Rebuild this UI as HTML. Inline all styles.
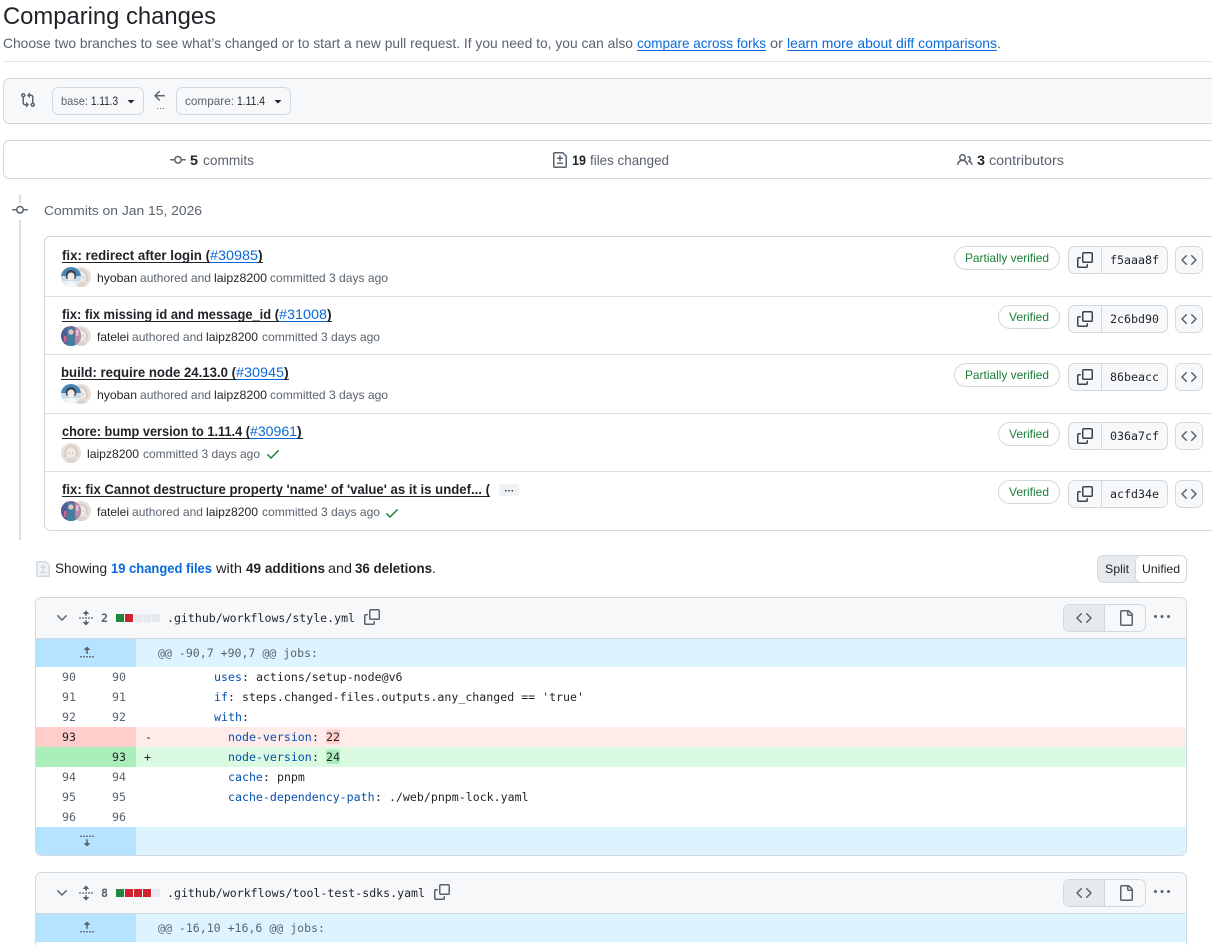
<!DOCTYPE html>
<html lang="en">
<head>
<meta charset="utf-8">
<title>Comparing changes</title>
<style>
html,body{margin:0;padding:0;background:#fff;width:1212px;height:945px;overflow:hidden}
svg{display:block}
text{font-family:"Liberation Sans",Arial,sans-serif;font-size:14px;fill:#1f2328;white-space:pre}
.m{fill:#59636e}
.b{font-weight:700}
.l{fill:#0969da}
.s{font-size:12px}
.g{fill:#1a7f37;font-size:12px}
.c{font-family:"DejaVu Sans Mono","Liberation Mono",monospace;font-size:11.6px}
.k{fill:#0550ae}
.n{fill:#59636e;text-anchor:end}
.i{fill:#59636e}
.d{fill:#1f2328}
.bx{fill:#f6f8fa;stroke:#d1d9e0}
</style>
</head>
<body>
<svg xmlns="http://www.w3.org/2000/svg" width="1212" height="945" viewBox="0 0 1212 945">
<defs>
<symbol id="compare" viewBox="0 0 16 16"><path d="M9.573.677A.25.25 0 0 1 10 .854V2.5h1A2.5 2.5 0 0 1 13.5 5v5.628a2.251 2.251 0 1 1-1.5 0V5a1 1 0 0 0-1-1h-1v1.646a.25.25 0 0 1-.427.177L7.177 3.427a.25.25 0 0 1 0-.354ZM6 12v-1.646a.25.25 0 0 1 .427-.177l2.396 2.396a.25.25 0 0 1 0 .354l-2.396 2.396A.25.25 0 0 1 6 15.146V13.5H5A2.5 2.5 0 0 1 2.5 11V5.372a2.25 2.25 0 1 1 1.5 0V11a1 1 0 0 0 1 1ZM4 3.25a.75.75 0 1 0-1.5 0 .75.75 0 0 0 1.5 0ZM12.75 12a.75.75 0 1 0 0 1.5.75.75 0 0 0 0-1.5Z"/></symbol>
<symbol id="commit" viewBox="0 0 16 16"><path d="M11.93 8.5a4.002 4.002 0 0 1-7.86 0H.75a.75.75 0 0 1 0-1.5h3.32a4.002 4.002 0 0 1 7.86 0h3.32a.75.75 0 0 1 0 1.5Zm-1.43-.75a2.5 2.5 0 1 0-5 0 2.5 2.5 0 0 0 5 0Z"/></symbol>
<symbol id="filediff" viewBox="0 0 16 16"><path d="M1 1.75C1 .784 1.784 0 2.75 0h7.586c.464 0 .909.184 1.237.513l2.914 2.914c.329.328.513.773.513 1.237v9.586A1.75 1.75 0 0 1 13.25 16H2.75A1.75 1.75 0 0 1 1 14.25Zm1.75-.25a.25.25 0 0 0-.25.25v12.5c0 .138.112.25.25.25h10.5a.25.25 0 0 0 .25-.25V4.664a.25.25 0 0 0-.073-.177l-2.914-2.914a.25.25 0 0 0-.177-.073ZM8 3.25a.75.75 0 0 1 .75.75v1.5h1.5a.75.75 0 0 1 0 1.5h-1.5v1.5a.75.75 0 0 1-1.5 0V7h-1.5a.75.75 0 0 1 0-1.5h1.5V4A.75.75 0 0 1 8 3.25Zm-3 8a.75.75 0 0 1 .75-.75h4.5a.75.75 0 0 1 0 1.5h-4.5a.75.75 0 0 1-.75-.75Z"/></symbol>
<symbol id="people" viewBox="0 0 16 16"><path d="M2 5.5a3.5 3.5 0 1 1 5.898 2.549 5.508 5.508 0 0 1 3.034 4.084.75.75 0 1 1-1.482.235 4 4 0 0 0-7.9 0 .75.75 0 0 1-1.482-.236A5.507 5.507 0 0 1 3.102 8.05 3.493 3.493 0 0 1 2 5.5ZM11 4a3.001 3.001 0 0 1 2.22 5.018 5.01 5.01 0 0 1 2.56 3.012.749.749 0 0 1-.885.954.752.752 0 0 1-.549-.514 3.507 3.507 0 0 0-2.522-2.372.75.75 0 0 1-.574-.73v-.352a.75.75 0 0 1 .416-.672A1.5 1.5 0 0 0 11 5.5.75.75 0 0 1 11 4Zm-5.5-.5a2 2 0 1 0-.001 3.999A2 2 0 0 0 5.5 3.5Z"/></symbol>
<symbol id="copy" viewBox="0 0 16 16"><path d="M0 6.75C0 5.784.784 5 1.75 5h1.5a.75.75 0 0 1 0 1.5h-1.5a.25.25 0 0 0-.25.25v7.5c0 .138.112.25.25.25h7.5a.25.25 0 0 0 .25-.25v-1.5a.75.75 0 0 1 1.5 0v1.5A1.75 1.75 0 0 1 9.25 16h-7.5A1.75 1.75 0 0 1 0 14.25Z"/><path d="M5 1.75C5 .784 5.784 0 6.75 0h7.5C15.216 0 16 .784 16 1.75v7.5A1.75 1.75 0 0 1 14.25 11h-7.5A1.75 1.75 0 0 1 5 9.25Zm1.75-.25a.25.25 0 0 0-.25.25v7.5c0 .138.112.25.25.25h7.5a.25.25 0 0 0 .25-.25v-7.5a.25.25 0 0 0-.25-.25Z"/></symbol>
<symbol id="code" viewBox="0 0 16 16"><path d="m11.28 3.22 4.25 4.25a.75.75 0 0 1 0 1.06l-4.25 4.25a.749.749 0 0 1-1.275-.326.749.749 0 0 1 .215-.734L13.94 8l-3.72-3.72a.749.749 0 0 1 .326-1.275.749.749 0 0 1 .734.215Zm-6.56 0a.751.751 0 0 1 1.042.018.751.751 0 0 1 .018 1.042L2.06 8l3.72 3.72a.749.749 0 0 1-.326 1.275.749.749 0 0 1-.734-.215L.47 8.53a.75.75 0 0 1 0-1.06Z"/></symbol>
<symbol id="file" viewBox="0 0 16 16"><path d="M2 1.75C2 .784 2.784 0 3.75 0h6.586c.464 0 .909.184 1.237.513l2.914 2.914c.329.328.513.773.513 1.237v9.586A1.75 1.75 0 0 1 13.25 16h-9.5A1.75 1.75 0 0 1 2 14.25Zm1.75-.25a.25.25 0 0 0-.25.25v12.5c0 .138.112.25.25.25h9.5a.25.25 0 0 0 .25-.25V6h-2.75A1.75 1.75 0 0 1 9 4.25V1.5Zm6.75.062V4.25c0 .138.112.25.25.25h2.688l-.011-.013-2.914-2.914-.013-.011Z"/></symbol>
<symbol id="kebab" viewBox="0 0 16 16"><path d="M8 9a1.5 1.5 0 1 0 0-3 1.5 1.5 0 0 0 0 3ZM1.5 9a1.5 1.5 0 1 0 0-3 1.5 1.5 0 0 0 0 3Zm13 0a1.5 1.5 0 1 0 0-3 1.5 1.5 0 0 0 0 3Z"/></symbol>
<symbol id="chev" viewBox="0 0 16 16"><path d="M12.78 5.22a.749.749 0 0 1 0 1.06l-4.25 4.25a.749.749 0 0 1-1.06 0L3.22 6.28a.749.749 0 1 1 1.06-1.06L8 8.939l3.72-3.719a.749.749 0 0 1 1.06 0Z"/></symbol>
<symbol id="check" viewBox="0 0 16 16"><path d="M13.78 4.22a.75.75 0 0 1 0 1.06l-7.25 7.25a.75.75 0 0 1-1.06 0L2.22 9.28a.751.751 0 0 1 .018-1.042.751.751 0 0 1 1.042-.018L6 10.94l6.72-6.72a.75.75 0 0 1 1.06 0Z"/></symbol>
<symbol id="arrow" viewBox="0 0 16 16"><path d="M7.78 12.53a.75.75 0 0 1-1.06 0L2.47 8.28a.75.75 0 0 1 0-1.06l4.25-4.25a.751.751 0 0 1 1.042.018.751.751 0 0 1 .018 1.042L4.81 7h7.44a.75.75 0 0 1 0 1.5H4.81l2.97 2.97a.75.75 0 0 1 0 1.06Z"/></symbol>
<symbol id="unfold" viewBox="0 0 16 16"><path d="m8.177.677 2.896 2.896a.25.25 0 0 1-.177.427H8.75v1.25a.75.75 0 0 1-1.5 0V4H5.104a.25.25 0 0 1-.177-.427L7.823.677a.25.25 0 0 1 .354 0ZM7.25 10.75a.75.75 0 0 1 1.5 0V12h2.146a.25.25 0 0 1 .177.427l-2.896 2.896a.25.25 0 0 1-.354 0l-2.896-2.896A.25.25 0 0 1 5.104 12H7.25v-1.25Zm-5-2a.75.75 0 0 0 0-1.5h-.5a.75.75 0 0 0 0 1.5h.5ZM6 8a.75.75 0 0 1-.75.75h-.5a.75.75 0 0 1 0-1.5h.5A.75.75 0 0 1 6 8Zm2.25.75a.75.75 0 0 0 0-1.5h-.5a.75.75 0 0 0 0 1.5h.5ZM12 8a.75.75 0 0 1-.75.75h-.5a.75.75 0 0 1 0-1.5h.5A.75.75 0 0 1 12 8Zm2.25.75a.75.75 0 0 0 0-1.5h-.5a.75.75 0 0 0 0 1.5h.5Z"/></symbol>
<symbol id="foldup" viewBox="0 0 16 16"><path d="M7.823 1.677 4.927 4.573A.25.25 0 0 0 5.104 5H7.25v3.236a.75.75 0 1 0 1.5 0V5h2.146a.25.25 0 0 0 .177-.427L8.177 1.677a.25.25 0 0 0-.354 0ZM13.75 11a.75.75 0 0 0 0 1.5h.5a.75.75 0 0 0 0-1.5h-.5Zm-3.75.75a.75.75 0 0 1 .75-.75h.5a.75.75 0 0 1 0 1.5h-.5a.75.75 0 0 1-.75-.75ZM7.75 11a.75.75 0 0 0 0 1.5h.5a.75.75 0 0 0 0-1.5h-.5ZM4 11.750a.75.75 0 0 1 .75-.75h.5a.75.75 0 0 1 0 1.5h-.5a.75.75 0 0 1-.75-.75ZM1.750 11a.75.75 0 0 0 0 1.5h.5a.75.75 0 0 0 0-1.5h-.5Z"/></symbol>
<symbol id="folddown" viewBox="0 0 16 16"><path d="m8.177 14.323 2.896-2.896a.25.25 0 0 0-.177-.427H8.75V7.764a.75.75 0 1 0-1.5 0V11H5.104a.25.25 0 0 0-.177.427l2.896 2.896a.25.25 0 0 0 .354 0ZM2.25 5a.75.75 0 0 0 0-1.5h-.5a.75.75 0 0 0 0 1.5h.5ZM6 4.25a.75.75 0 0 1-.75.75h-.5a.75.75 0 0 1 0-1.5h.5a.75.75 0 0 1 .75.75ZM8.25 5a.75.75 0 0 0 0-1.5h-.5a.75.75 0 0 0 0 1.5h.5ZM12 4.25a.75.75 0 0 1-.75.75h-.5a.75.75 0 0 1 0-1.5h.5a.75.75 0 0 1 .75.75Zm2.25.75a.75.75 0 0 0 0-1.5h-.5a.75.75 0 0 0 0 1.5h.5Z"/></symbol>
<clipPath id="acl"><circle cx="10" cy="10" r="10"/></clipPath>
<symbol id="avH" viewBox="0 0 20 20" overflow="visible"><g clip-path="url(#acl)"><rect width="20" height="20" fill="#c9dbe8"/><rect width="20" height="9" fill="#4a86b5"/><rect y="14" width="20" height="6" fill="#e6edf2"/><path d="M5 11C4 5 7 3 10 3s6 2 5 8l-2 1V8H7v4Z" fill="#3a4452"/><ellipse cx="10" cy="9.5" rx="3.600" ry="4" fill="#f0ecea"/><path d="M5 20c0-4 2-6 5-6s5 2 5 6Z" fill="#f5f6f7"/></g></symbol>
<symbol id="avF" viewBox="0 0 20 20" overflow="visible"><g clip-path="url(#acl)"><rect width="20" height="20" fill="#74648f"/><rect x="0" width="6" height="20" fill="#4f5f96"/><rect x="14" width="6" height="20" fill="#b48ba3"/><path d="M7 2h6v8l2 10H5l2-10Z" fill="#42809f"/><circle cx="10" cy="6" r="2.600" fill="#e3c6c2"/><rect x="3" y="10" width="2.500" height="6" fill="#c96a86"/><rect x="15" y="4" width="2.500" height="6" fill="#e2bccb"/></g></symbol>
<symbol id="avL" viewBox="0 0 20 20" overflow="visible"><g clip-path="url(#acl)"><rect width="20" height="20" fill="#e6ded8"/><path d="M4 14C3 7 7 3 10 3s7 4 6 11" fill="none" stroke="#cfc5be" stroke-width="1.200"/><ellipse cx="10" cy="10" rx="4.500" ry="4.800" fill="#f0eae6"/><path d="M4 20c1-4 3-5 6-5s5 1 6 5Z" fill="#dcd3cd"/><circle cx="8.200" cy="10" r=".6" fill="#a89a92"/><circle cx="11.800" cy="10" r=".6" fill="#a89a92"/></g></symbol>
<clipPath id="f1c"><rect x="36" y="598" width="1150" height="257" rx="6"/></clipPath>
<clipPath id="f2c"><path d="M36 945V879a6 6 0 0 1 6-6H1180a6 6 0 0 1 6 6V945Z"/></clipPath>
</defs>

<!-- Heading -->
<text x="3" y="24" style="font-size:24px" textLength="213" lengthAdjust="spacingAndGlyphs">Comparing changes</text>
<text x="3" y="48" class="m" textLength="630" lengthAdjust="spacingAndGlyphs">Choose two branches to see what’s changed or to start a new pull request. If you need to, you can also</text>
<text x="637" y="48" class="l" textLength="129" lengthAdjust="spacingAndGlyphs">compare across forks</text>
<rect x="637" y="50" width="129" height="1" fill="#0969da"/>
<text x="770" y="48" class="m" textLength="13" lengthAdjust="spacingAndGlyphs">or</text>
<text x="787" y="48" class="l" textLength="210" lengthAdjust="spacingAndGlyphs">learn more about diff comparisons</text>
<rect x="787" y="50" width="210" height="1" fill="#0969da"/>
<text x="997" y="48" class="m">.</text>
<rect x="3" y="61" width="1209" height="1" fill="#e1e5ea"/>

<!-- Range editor -->
<path d="M1212 78.500H9.500a6 6 0 0 0-6 6v33a6 6 0 0 0 6 6H1212" class="bx"/>
<use href="#compare" x="20" y="92" width="16" height="16" class="i"/>
<rect x="52.500" y="87.500" width="91" height="27" rx="6" class="bx"/>
<text x="61" y="105" class="s m" textLength="27" lengthAdjust="spacingAndGlyphs">base:</text>
<text x="91" y="105" class="s" textLength="27" lengthAdjust="spacingAndGlyphs">1.11.3</text>
<path d="M127.500 100h7l-3.500 3.500Z" fill="#1f2328"/>
<use href="#arrow" x="152" y="88" width="16" height="16" class="i"/>
<g fill="#59636e"><rect x="157" y="108" width="1" height="1"/><rect x="160" y="108" width="1" height="1"/><rect x="163" y="108" width="1" height="1"/></g>
<rect x="176.500" y="87.500" width="114" height="27" rx="6" class="bx"/>
<text x="185" y="105" class="s m" textLength="49" lengthAdjust="spacingAndGlyphs">compare:</text>
<text x="237" y="105" class="s" textLength="28" lengthAdjust="spacingAndGlyphs">1.11.4</text>
<path d="M274.500 100h7l-3.500 3.500Z" fill="#1f2328"/>

<!-- Stats -->
<path d="M1212 140.500H9.500a6 6 0 0 0-6 6v26a6 6 0 0 0 6 6H1212" fill="#fff" stroke="#d1d9e0"/>
<use href="#commit" x="170" y="152" width="16" height="16" class="i"/>
<text x="190" y="165" class="b" textLength="8" lengthAdjust="spacingAndGlyphs">5</text>
<text x="203" y="165" class="m" textLength="51" lengthAdjust="spacingAndGlyphs">commits</text>
<use href="#filediff" x="552" y="152" width="16" height="16" class="i"/>
<text x="572" y="165" class="b" textLength="14" lengthAdjust="spacingAndGlyphs">19</text>
<text x="590" y="165" class="m" textLength="79" lengthAdjust="spacingAndGlyphs">files changed</text>
<use href="#people" x="957" y="152" width="16" height="16" class="i"/>
<text x="977" y="165" class="b" textLength="8" lengthAdjust="spacingAndGlyphs">3</text>
<text x="989" y="165" class="m" textLength="75" lengthAdjust="spacingAndGlyphs">contributors</text>

<!-- Commits timeline -->
<rect x="19" y="195" width="2" height="345" fill="#d8dee4"/>
<rect x="12" y="203" width="16" height="17" fill="#fff"/>
<use href="#commit" x="12" y="202" width="16" height="16" class="i"/>
<text x="44" y="215" class="m" style="font-size:13px" textLength="158" lengthAdjust="spacingAndGlyphs">Commits on Jan 15, 2026</text>

<path d="M1212 236.500H50.500a6 6 0 0 0-6 6v282a6 6 0 0 0 6 6H1212" fill="#fff" stroke="#d1d9e0"/>
<g fill="#d8dee4">
<rect x="45" y="296" width="1167" height="1"/>
<rect x="45" y="354" width="1167" height="1"/>
<rect x="45" y="413" width="1167" height="1"/>
<rect x="45" y="471" width="1167" height="1"/>
</g>

<!-- Row 1 -->
<text x="62" y="260" class="b" textLength="148" lengthAdjust="spacingAndGlyphs">fix: redirect after login (</text>
<text x="210" y="260" class="l" textLength="48" lengthAdjust="spacingAndGlyphs">#30985</text>
<text x="258" y="260" class="b">)</text>
<rect x="62" y="262" width="148" height="1" fill="#1f2328"/><rect x="210" y="262" width="48" height="1" fill="#0969da"/><rect x="258" y="262" width="5" height="1" fill="#1f2328"/>
<use href="#avL" x="71" y="267" width="20" height="20"/><use href="#avH" x="61" y="267" width="20" height="20"/>
<text x="97" y="282" class="s" textLength="40" lengthAdjust="spacingAndGlyphs">hyoban</text>
<text x="140" y="282" class="s m" textLength="71" lengthAdjust="spacingAndGlyphs">authored and</text>
<text x="214" y="282" class="s" textLength="53" lengthAdjust="spacingAndGlyphs">laipz8200</text>
<text x="270" y="282" class="s m" textLength="118" lengthAdjust="spacingAndGlyphs">committed 3 days ago</text>

<!-- Row 2 -->
<text x="62" y="319" class="b" textLength="217" lengthAdjust="spacingAndGlyphs">fix: fix missing id and message_id (</text>
<text x="279" y="319" class="l" textLength="48" lengthAdjust="spacingAndGlyphs">#31008</text>
<text x="327" y="319" class="b">)</text>
<rect x="62" y="321" width="217" height="1" fill="#1f2328"/><rect x="279" y="321" width="48" height="1" fill="#0969da"/><rect x="327" y="321" width="5" height="1" fill="#1f2328"/>
<use href="#avL" x="71" y="326" width="20" height="20"/><use href="#avF" x="61" y="326" width="20" height="20"/>
<text x="97" y="341" class="s" textLength="32" lengthAdjust="spacingAndGlyphs">fatelei</text>
<text x="132" y="341" class="s m" textLength="71" lengthAdjust="spacingAndGlyphs">authored and</text>
<text x="206" y="341" class="s" textLength="52" lengthAdjust="spacingAndGlyphs">laipz8200</text>
<text x="262" y="341" class="s m" textLength="118" lengthAdjust="spacingAndGlyphs">committed 3 days ago</text>

<!-- Row 3 -->
<text x="61" y="377" class="b" textLength="175" lengthAdjust="spacingAndGlyphs">build: require node 24.13.0 (</text>
<text x="236" y="377" class="l" textLength="48" lengthAdjust="spacingAndGlyphs">#30945</text>
<text x="284" y="377" class="b">)</text>
<rect x="61" y="379" width="175" height="1" fill="#1f2328"/><rect x="236" y="379" width="48" height="1" fill="#0969da"/><rect x="284" y="379" width="5" height="1" fill="#1f2328"/>
<use href="#avL" x="71" y="384" width="20" height="20"/><use href="#avH" x="61" y="384" width="20" height="20"/>
<text x="97" y="399" class="s" textLength="40" lengthAdjust="spacingAndGlyphs">hyoban</text>
<text x="140" y="399" class="s m" textLength="71" lengthAdjust="spacingAndGlyphs">authored and</text>
<text x="214" y="399" class="s" textLength="53" lengthAdjust="spacingAndGlyphs">laipz8200</text>
<text x="270" y="399" class="s m" textLength="118" lengthAdjust="spacingAndGlyphs">committed 3 days ago</text>

<!-- Row 4 -->
<text x="62" y="436" class="b" textLength="188" lengthAdjust="spacingAndGlyphs">chore: bump version to 1.11.4 (</text>
<text x="250" y="436" class="l" textLength="47" lengthAdjust="spacingAndGlyphs">#30961</text>
<text x="297" y="436" class="b">)</text>
<rect x="62" y="438" width="188" height="1" fill="#1f2328"/><rect x="250" y="438" width="47" height="1" fill="#0969da"/><rect x="297" y="438" width="6" height="1" fill="#1f2328"/>
<use href="#avL" x="61" y="443" width="20" height="20"/>
<text x="87" y="458" class="s" textLength="52" lengthAdjust="spacingAndGlyphs">laipz8200</text>
<text x="143" y="458" class="s m" textLength="117" lengthAdjust="spacingAndGlyphs">committed 3 days ago</text>
<use href="#check" x="265" y="446" width="16" height="16" fill="#1a7f37"/>

<!-- Row 5 -->
<text x="62" y="494" class="b" textLength="428" lengthAdjust="spacingAndGlyphs">fix: fix Cannot destructure property 'name' of 'value' as it is undef... (</text>
<rect x="62" y="496" width="428" height="1" fill="#1f2328"/>
<rect x="499" y="484" width="20" height="12" rx="1" fill="#eff2f5"/>
<g fill="#1f2328"><rect x="505" y="490" width="1.400" height="1.400"/><rect x="508.300" y="490" width="1.400" height="1.400"/><rect x="511.600" y="490" width="1.400" height="1.400"/></g>
<use href="#avL" x="71" y="501" width="20" height="20"/><use href="#avF" x="61" y="501" width="20" height="20"/>
<text x="97" y="516" class="s" textLength="32" lengthAdjust="spacingAndGlyphs">fatelei</text>
<text x="132" y="516" class="s m" textLength="71" lengthAdjust="spacingAndGlyphs">authored and</text>
<text x="206" y="516" class="s" textLength="52" lengthAdjust="spacingAndGlyphs">laipz8200</text>
<text x="262" y="516" class="s m" textLength="118" lengthAdjust="spacingAndGlyphs">committed 3 days ago</text>
<use href="#check" x="384" y="505" width="16" height="16" fill="#1a7f37"/>

<!-- Right column: badges and buttons -->
<g fill="#fff" stroke="#d1d9e0">
<rect x="954.500" y="246.500" width="105" height="23" rx="11.500"/>
<rect x="998.500" y="305.500" width="61" height="23" rx="11.500"/>
<rect x="954.500" y="363.500" width="105" height="23" rx="11.500"/>
<rect x="998.500" y="422.500" width="61" height="23" rx="11.500"/>
<rect x="998.500" y="480.500" width="61" height="23" rx="11.500"/>
</g>
<text x="965" y="262" class="g" textLength="84" lengthAdjust="spacingAndGlyphs">Partially verified</text>
<text x="1009" y="321" class="g" textLength="40" lengthAdjust="spacingAndGlyphs">Verified</text>
<text x="965" y="379" class="g" textLength="84" lengthAdjust="spacingAndGlyphs">Partially verified</text>
<text x="1009" y="438" class="g" textLength="40" lengthAdjust="spacingAndGlyphs">Verified</text>
<text x="1009" y="496" class="g" textLength="40" lengthAdjust="spacingAndGlyphs">Verified</text>

<g class="bx">
<rect x="1068.500" y="246.500" width="99" height="27" rx="6"/><rect x="1175.500" y="246.500" width="27" height="27" rx="6"/>
<rect x="1068.500" y="305.500" width="99" height="27" rx="6"/><rect x="1175.500" y="305.500" width="27" height="27" rx="6"/>
<rect x="1068.500" y="363.500" width="99" height="27" rx="6"/><rect x="1175.500" y="363.500" width="27" height="27" rx="6"/>
<rect x="1068.500" y="422.500" width="99" height="27" rx="6"/><rect x="1175.500" y="422.500" width="27" height="27" rx="6"/>
<rect x="1068.500" y="480.500" width="99" height="27" rx="6"/><rect x="1175.500" y="480.500" width="27" height="27" rx="6"/>
</g>
<g fill="#d1d9e0">
<rect x="1101" y="247" width="1" height="27"/><rect x="1101" y="306" width="1" height="27"/><rect x="1101" y="364" width="1" height="27"/><rect x="1101" y="423" width="1" height="27"/><rect x="1101" y="481" width="1" height="27"/>
</g>
<g fill="#3d444d">
<use href="#copy" x="1077" y="252" width="16" height="16"/>
<use href="#copy" x="1077" y="311" width="16" height="16"/>
<use href="#copy" x="1077" y="369" width="16" height="16"/>
<use href="#copy" x="1077" y="428" width="16" height="16"/>
<use href="#copy" x="1077" y="486" width="16" height="16"/>
</g>
<g fill="#59636e">
<use href="#code" x="1181" y="252" width="16" height="16"/>
<use href="#code" x="1181" y="311" width="16" height="16"/>
<use href="#code" x="1181" y="369" width="16" height="16"/>
<use href="#code" x="1181" y="428" width="16" height="16"/>
<use href="#code" x="1181" y="486" width="16" height="16"/>
</g>
<text x="1110" y="264" class="c" textLength="49" lengthAdjust="spacingAndGlyphs">f5aaa8f</text>
<text x="1110" y="323" class="c" textLength="49" lengthAdjust="spacingAndGlyphs">2c6bd90</text>
<text x="1110" y="381" class="c" textLength="49" lengthAdjust="spacingAndGlyphs">86beacc</text>
<text x="1110" y="440" class="c" textLength="49" lengthAdjust="spacingAndGlyphs">036a7cf</text>
<text x="1110" y="498" class="c" textLength="49" lengthAdjust="spacingAndGlyphs">acfd34e</text>

<!-- Diff summary -->
<rect x="37" y="562" width="12" height="14" rx="1" fill="#f0f2f4"/>
<use href="#filediff" x="35" y="561" width="16" height="16" fill="#d1d9e0"/>
<text x="55" y="573" textLength="52" lengthAdjust="spacingAndGlyphs">Showing</text>
<text x="111" y="573" class="b l" textLength="101" lengthAdjust="spacingAndGlyphs">19 changed files</text>
<text x="216" y="573" textLength="26" lengthAdjust="spacingAndGlyphs">with</text>
<text x="246" y="573" class="b" textLength="79" lengthAdjust="spacingAndGlyphs">49 additions</text>
<text x="328" y="573" textLength="24" lengthAdjust="spacingAndGlyphs">and</text>
<text x="355" y="573" class="b" textLength="77" lengthAdjust="spacingAndGlyphs">36 deletions</text>
<text x="432" y="573">.</text>

<rect x="1097.500" y="555.500" width="89" height="27" rx="6" fill="#e6eaef" stroke="#d1d9e0"/>
<rect x="1135.500" y="555.500" width="51" height="27" rx="6" fill="#fff" stroke="#d1d9e0"/>
<text x="1105" y="573" class="s" textLength="24" lengthAdjust="spacingAndGlyphs">Split</text>
<text x="1142" y="573" class="s" textLength="38" lengthAdjust="spacingAndGlyphs">Unified</text>

<!-- File 1 -->
<g clip-path="url(#f1c)">
<rect x="36" y="598" width="1150" height="257" fill="#fff"/>
<rect x="36" y="598" width="1150" height="40" fill="#f6f8fa"/>
<rect x="36" y="638" width="1150" height="1" fill="#d1d9e0"/>
<rect x="36" y="639" width="100" height="28" fill="#b6e3ff"/>
<rect x="136" y="639" width="1050" height="28" fill="#ddf4ff"/>
<rect x="36" y="727" width="100" height="20" fill="#ffcecb"/>
<rect x="136" y="727" width="1050" height="20" fill="#ffebe9"/>
<rect x="36" y="747" width="100" height="20" fill="#aceebb"/>
<rect x="136" y="747" width="1050" height="20" fill="#dafbe1"/>
<rect x="36" y="827" width="100" height="28" fill="#b6e3ff"/>
<rect x="136" y="827" width="1050" height="28" fill="#ddf4ff"/>
</g>
<rect x="35.500" y="597.500" width="1151" height="258" rx="6" fill="none" stroke="#d1d9e0"/>
<use href="#chev" x="54" y="610" width="16" height="16" class="i"/>
<use href="#unfold" x="78" y="610" width="16" height="16" class="i"/>
<text x="101" y="622" class="c b m" textLength="7" lengthAdjust="spacingAndGlyphs">2</text>
<rect x="116" y="614" width="8" height="8" fill="#1f883d"/><rect x="125" y="614" width="8" height="8" fill="#cf222e"/><rect x="134" y="614" width="8" height="8" fill="#e6eaef"/><rect x="143" y="614" width="8" height="8" fill="#e6eaef"/><rect x="152" y="614" width="8" height="8" fill="#e6eaef"/>
<text x="167" y="622" class="c" textLength="188" lengthAdjust="spacingAndGlyphs">.github/workflows/style.yml</text>
<use href="#copy" x="364" y="609" width="16" height="16" class="i"/>
<rect x="1063.500" y="604.500" width="82" height="27" rx="6" fill="#f6f8fa" stroke="#d1d9e0"/>
<path d="M1069.500 605h35v26h-35a5.500 5.500 0 0 1-5.500-5.500v-15a5.500 5.500 0 0 1 5.500-5.500Z" fill="#e6eaef"/>
<rect x="1104" y="605" width="1" height="27" fill="#d1d9e0"/>
<use href="#code" x="1076" y="610" width="16" height="16" class="i"/>
<use href="#file" x="1118" y="610" width="16" height="16" class="i"/>
<use href="#kebab" x="1154" y="609" width="16" height="16" class="i"/>
<use href="#foldup" x="79" y="645" width="16" height="16" class="i"/>
<text x="158" y="657" class="c m" textLength="160" lengthAdjust="spacingAndGlyphs">@@ -90,7 +90,7 @@ jobs:</text>

<text x="76" y="681" class="c n">90</text><text x="126" y="681" class="c n">90</text>
<text x="214" y="681" class="c k">uses</text><text x="242" y="681" class="c">: actions/setup-node@v6</text>
<text x="76" y="701" class="c n">91</text><text x="126" y="701" class="c n">91</text>
<text x="214" y="701" class="c k">if</text><text x="228" y="701" class="c">: steps.changed-files.outputs.any_changed == 'true'</text>
<text x="76" y="721" class="c n">92</text><text x="126" y="721" class="c n">92</text>
<text x="214" y="721" class="c k">with</text><text x="242" y="721" class="c">:</text>
<text x="76" y="741" class="c" text-anchor="end">93</text>
<text x="145" y="741" class="c">-</text>
<text x="228" y="741" class="c k">node-version</text><text x="312" y="741" class="c">:</text>
<rect x="326" y="729.500" width="14" height="14.500" rx="2" fill="#ffcecb"/>
<text x="326" y="741" class="c">22</text>
<text x="126" y="761" class="c" text-anchor="end">93</text>
<text x="144" y="761" class="c">+</text>
<text x="228" y="761" class="c k">node-version</text><text x="312" y="761" class="c">:</text>
<rect x="326" y="749.500" width="14" height="14.500" rx="2" fill="#aceebb"/>
<text x="326" y="761" class="c">24</text>
<text x="76" y="781" class="c n">94</text><text x="126" y="781" class="c n">94</text>
<text x="228" y="781" class="c k">cache</text><text x="263" y="781" class="c">: pnpm</text>
<text x="76" y="801" class="c n">95</text><text x="126" y="801" class="c n">95</text>
<text x="228" y="801" class="c k">cache-dependency-path</text><text x="375" y="801" class="c">: ./web/pnpm-lock.yaml</text>
<text x="76" y="821" class="c n">96</text><text x="126" y="821" class="c n">96</text>
<use href="#folddown" x="79" y="832" width="16" height="16" class="i"/>

<!-- File 2 -->
<g clip-path="url(#f2c)">
<rect x="36" y="873" width="1150" height="72" fill="#fff"/>
<rect x="36" y="873" width="1150" height="40" fill="#f6f8fa"/>
<rect x="36" y="913" width="1150" height="1" fill="#d1d9e0"/>
<rect x="36" y="914" width="100" height="28" fill="#b6e3ff"/>
<rect x="136" y="914" width="1050" height="28" fill="#ddf4ff"/>
</g>
<path d="M35.500 945V878.500a6 6 0 0 1 6-6H1180.500a6 6 0 0 1 6 6V945" fill="none" stroke="#d1d9e0"/>
<use href="#chev" x="54" y="885" width="16" height="16" class="i"/>
<use href="#unfold" x="78" y="885" width="16" height="16" class="i"/>
<text x="101" y="897" class="c b m" textLength="7" lengthAdjust="spacingAndGlyphs">8</text>
<rect x="116" y="889" width="8" height="8" fill="#1f883d"/><rect x="125" y="889" width="8" height="8" fill="#cf222e"/><rect x="134" y="889" width="8" height="8" fill="#cf222e"/><rect x="143" y="889" width="8" height="8" fill="#cf222e"/><rect x="152" y="889" width="8" height="8" fill="#e6eaef"/>
<text x="167" y="897" class="c" textLength="258" lengthAdjust="spacingAndGlyphs">.github/workflows/tool-test-sdks.yaml</text>
<use href="#copy" x="434" y="884" width="16" height="16" class="i"/>
<rect x="1063.500" y="879.500" width="82" height="27" rx="6" fill="#f6f8fa" stroke="#d1d9e0"/>
<path d="M1069.500 880h35v26h-35a5.500 5.500 0 0 1-5.500-5.500v-15a5.500 5.500 0 0 1 5.500-5.500Z" fill="#e6eaef"/>
<rect x="1104" y="880" width="1" height="27" fill="#d1d9e0"/>
<use href="#code" x="1076" y="885" width="16" height="16" class="i"/>
<use href="#file" x="1118" y="885" width="16" height="16" class="i"/>
<use href="#kebab" x="1154" y="884" width="16" height="16" class="i"/>
<use href="#foldup" x="79" y="920" width="16" height="16" class="i"/>
<text x="158" y="932" class="c m" textLength="167" lengthAdjust="spacingAndGlyphs">@@ -16,10 +16,6 @@ jobs:</text>
</svg>
</body>
</html>
